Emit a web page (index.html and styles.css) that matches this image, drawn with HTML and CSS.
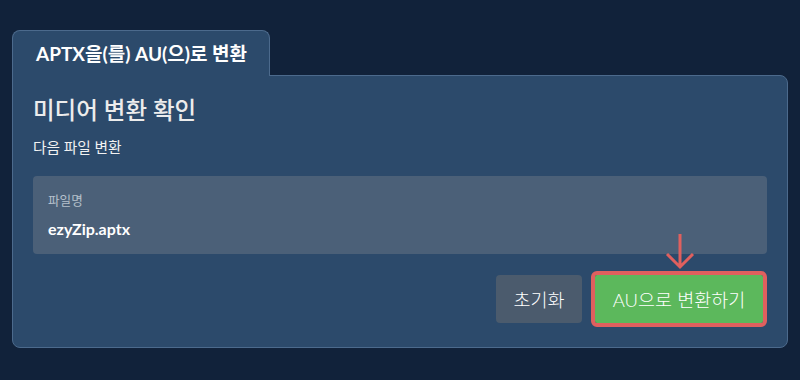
FILE: index.html
```html
<!DOCTYPE html>
<html lang="ko">
<head>
    <meta charset="UTF-8">
    <title>APTX을(를) AU(으)로 변환</title>
    <link rel="stylesheet" href="styles.css">
</head>
<body>

    <div class="converter">
        <div class="tabs">
            <div class="tab">APTX을(를) AU(으)로 변환</div>
        </div>

        <div class="panel">
            <h1>미디어 변환 확인</h1>
            <p class="subtitle">다음 파일 변환</p>

            <div class="file-box">
                <div class="file-label">파일명</div>
                <div class="file-name">ezyZip.aptx</div>
            </div>

            <div class="actions">
                <button class="btn btn-reset">초기화</button>
                <div class="convert-wrap">
                    <svg class="hint-arrow" width="32" height="38" viewBox="0 0 32 38">
                        <path d="M16 1 L16 34 M3 21 L16 34 L29 21" fill="none" stroke="#e0605e" stroke-width="3"/>
                    </svg>
                    <button class="btn btn-convert">AU으로 변환하기</button>
                </div>
            </div>
        </div>
    </div>

</body>
</html>
```

FILE: styles.css
```css
body {
    margin: 0;
    padding: 30px 12px 0 12px;
    background-color: #11223a;
    font-family: 'Lato', 'Noto Sans CJK KR', sans-serif;
    color: #f2f2f2;
}

.converter {
    width: 776px;
}

.tabs {
    display: flex;
}

.tab {
    width: 258px;
    height: 46px;
    box-sizing: border-box;
    padding: 8px 0 0 23px;
    background-color: #2c4a6b;
    border: 1px solid #4c6a8c;
    border-bottom: none;
    border-radius: 8px 8px 0 0;
    margin-bottom: -1px;
    position: relative;
    z-index: 1;
    font-size: 19px;
    font-weight: 700;
    color: #fff;
}

.panel {
    background-color: #2c4a6b;
    border: 1px solid #4c6a8c;
    border-radius: 0 8px 8px 8px;
    padding: 19px 20px 24px 20px;
}

h1 {
    margin: 0;
    font-size: 23.5px;
    line-height: 30px;
    font-weight: 500;
    color: #ececec;
}

.subtitle {
    margin: 12px 0 0 0;
    font-size: 14.7px;
    line-height: 20px;
    color: #f2f2f2;
}

.file-box {
    margin-top: 19px;
    background-color: #4b6078;
    border-radius: 4px;
    padding: 16px 15px 14px 15px;
}

.file-label {
    font-size: 12.6px;
    line-height: 18px;
    color: #b6c0cc;
}

.file-name {
    margin-top: 8px;
    font-size: 16px;
    line-height: 22px;
    font-weight: 700;
    color: #fff;
}

.actions {
    display: flex;
    justify-content: flex-end;
    gap: 13px;
    margin-top: 21px;
}

.btn {
    height: 48px;
    border: none;
    border-radius: 4px;
    font-family: inherit;
    font-size: 18.5px;
    font-weight: 300;
    color: #fff;
    padding: 0;
}

.btn-reset {
    width: 86px;
    background-color: #4b5b6d;
}

.convert-wrap {
    position: relative;
    margin-right: 4px;
}

.btn-convert {
    width: 168px;
    background-color: #5cb85c;
    outline: 4px solid #e0605e;
    border-radius: 2px;
}

.hint-arrow {
    position: absolute;
    left: 69px;
    top: -42px;
}
```
